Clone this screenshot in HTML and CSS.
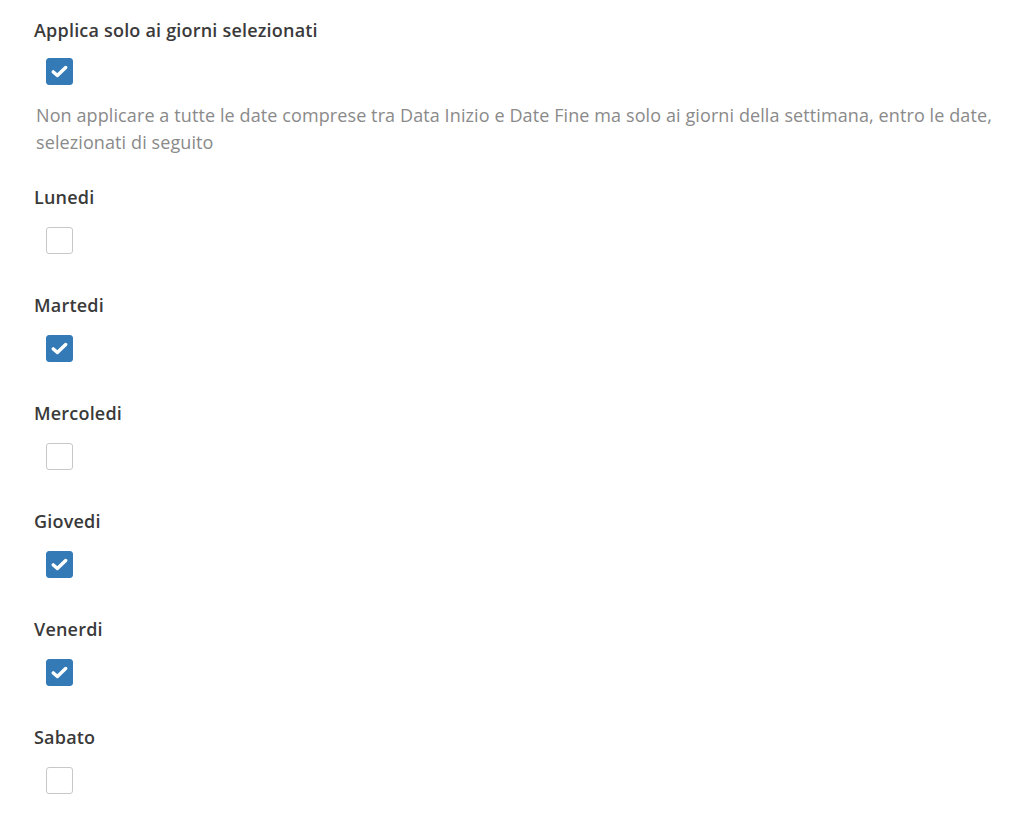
FILE: index.html
```html
<!DOCTYPE html>
<html lang="it">
<head>
    <meta charset="UTF-8">
    <title>Giorni selezionati</title>
    <link rel="stylesheet" href="styles.css">
</head>
<body>

<div class="form">
    <!-- Apply only on selected days -->
    <div class="form-group">
        <label class="control-label">Applica solo ai giorni selezionati</label>
        <span class="check checked">
            <svg viewBox="0 0 16 16"><path d="M2.2 8.4 L6 11.8 L13.8 4.2" /></svg>
        </span>
        <p class="help">Non applicare a tutte le date comprese tra Data Inizio e Date Fine ma solo ai giorni della settimana, entro le date, selezionati di seguito</p>
    </div>

    <div class="form-group day">
        <label class="control-label">Lunedi</label>
        <span class="check"></span>
    </div>

    <div class="form-group day">
        <label class="control-label">Martedi</label>
        <span class="check checked">
            <svg viewBox="0 0 16 16"><path d="M2.2 8.4 L6 11.8 L13.8 4.2" /></svg>
        </span>
    </div>

    <div class="form-group day">
        <label class="control-label">Mercoledi</label>
        <span class="check"></span>
    </div>

    <div class="form-group day">
        <label class="control-label">Giovedi</label>
        <span class="check checked">
            <svg viewBox="0 0 16 16"><path d="M2.2 8.4 L6 11.8 L13.8 4.2" /></svg>
        </span>
    </div>

    <div class="form-group day">
        <label class="control-label">Venerdi</label>
        <span class="check checked">
            <svg viewBox="0 0 16 16"><path d="M2.2 8.4 L6 11.8 L13.8 4.2" /></svg>
        </span>
    </div>

    <div class="form-group day">
        <label class="control-label">Sabato</label>
        <span class="check"></span>
    </div>
</div>

</body>
</html>
```
FILE: styles.css
```css
body {
    margin: 0;
    font-family: "Open Sans", "Liberation Sans", sans-serif;
    color: #333;
    background: #fff;
}

.form {
    padding: 17px 0 0 34px;
}

.form-group {
    display: flex;
    flex-direction: column;
    align-items: flex-start;
}

.day {
    margin-top: 28px;
}

.day + .day {
    margin-top: 38px;
}

.control-label {
    font-size: 18px;
    font-weight: 600;
    letter-spacing: 0.2px;
    line-height: 26px;
    color: #3a3a3a;
}

.check {
    box-sizing: border-box;
    width: 27px;
    height: 27px;
    margin: 15px 0 0 12px;
    border: 1px solid #c8c8c8;
    border-radius: 3px;
    background: #fff;
    display: flex;
    align-items: center;
    justify-content: center;
}

.day .check {
    margin-top: 17px;
}

.check.checked {
    background: #337ab7;
    border-color: #337ab7;
}

.check svg {
    width: 17px;
    height: 17px;
}

.check svg path {
    fill: none;
    stroke: #fff;
    stroke-width: 3.2;
    stroke-linecap: round;
    stroke-linejoin: round;
}

.help {
    margin: 17px 0 0 2px;
    font-size: 18px;
    letter-spacing: 0.1px;
    line-height: 27px;
    color: #8a8a8a;
}
```
